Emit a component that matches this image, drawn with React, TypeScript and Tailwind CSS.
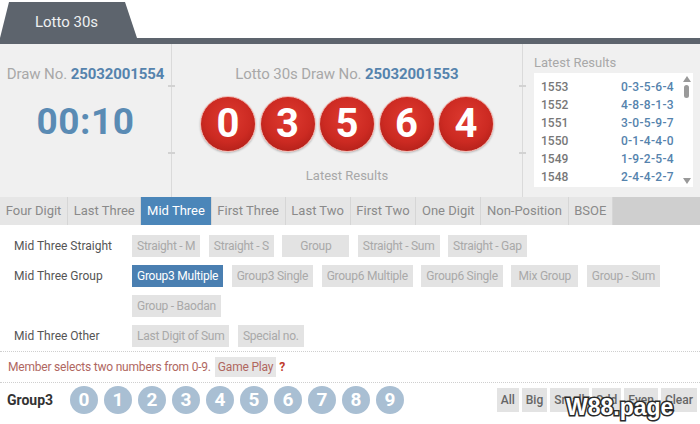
import React from "react";

const tabs = ["Four Digit", "Last Three", "Mid Three", "First Three", "Last Two", "First Two", "One Digit", "Non-Position", "BSOE"];

const history: [string, string][] = [
  ["1553", "0-3-5-6-4"],
  ["1552", "4-8-8-1-3"],
  ["1551", "3-0-5-9-7"],
  ["1550", "0-1-4-4-0"],
  ["1549", "1-9-2-5-4"],
  ["1548", "2-4-4-2-7"],
];

type Opt = { label: string; active?: boolean; wide?: boolean };
const optionRows: { title: string; opts: Opt[] }[] = [
  {
    title: "Mid Three Straight",
    opts: [{ label: "Straight - M" }, { label: "Straight - S" }, { label: "Group", wide: true }, { label: "Straight - Sum" }, { label: "Straight - Gap" }],
  },
  {
    title: "Mid Three Group",
    opts: [
      { label: "Group3 Multiple", active: true },
      { label: "Group3 Single" },
      { label: "Group6 Multiple" },
      { label: "Group6 Single" },
      { label: "Mix Group", wide: true },
      { label: "Group - Sum" },
    ],
  },
  { title: "", opts: [{ label: "Group - Baodan" }] },
  { title: "Mid Three Other", opts: [{ label: "Last Digit of Sum" }, { label: "Special no." }] },
];

export default function App() {
  return (
    <div className="w-[700px] h-[424px] overflow-hidden bg-white relative" style={{ fontFamily: "Roboto, 'Liberation Sans', sans-serif" }}>
      {/* game tab */}
      <div className="h-[38px] pt-[2px]">
        <div className="w-[137px] h-[36px] bg-[#5d646d] rounded-t-[8px] [clip-path:polygon(0_100%,9px_0,125px_0,137px_100%)] flex items-center justify-center pr-[4px] pt-[4px]">
          <span className="text-[15px] text-[#eef0f2]">Lotto 30s</span>
        </div>
      </div>
      <div className="h-[6px] bg-[#5d646d]" />

      {/* draw panel */}
      <div className="h-[153px] bg-[#f0f0f0] flex">
        <div className="w-[172px] border-r border-[#dadada] relative flex flex-col items-center pt-[19px]">
          <div className="text-[15px] text-[#a8a8a8] tracking-[-0.1px]">
            Draw No. <span className="font-bold text-[#5583ad]">25032001554</span>
          </div>
          <div className="mt-[13px] text-[37px] leading-[46px] font-bold text-[#5a8bb4] tracking-[0.5px]">00:10</div>
          <div className="absolute right-[-4px] top-[41px] w-[7px] h-[2px] bg-[#d2d2d2]" />
          <div className="absolute right-[-4px] top-[108px] w-[7px] h-[2px] bg-[#d2d2d2]" />
        </div>

        <div className="w-[351px] border-r border-[#dadada] relative flex flex-col items-center pt-[19px]">
          <div className="text-[15px] text-[#a8a8a8] tracking-[-0.1px]">
            Lotto 30s Draw No. <span className="font-bold text-[#5583ad]">25032001553</span>
          </div>
          <div className="mt-[10px] flex gap-[3.5px]">
            {["0", "3", "5", "6", "4"].map((n, i) => (
              <div
                key={i}
                className="w-[56px] h-[56px] rounded-full border border-[#f3b9b2] flex items-center justify-center bg-[radial-gradient(circle_at_50%_40%,#de3a30_0%,#cc2a22_55%,#a11a14_100%)] shadow-[0_1px_2px_rgba(0,0,0,0.25)]"
              >
                <span className="text-[40px] font-bold text-white leading-none mt-[1px]">{n}</span>
              </div>
            ))}
          </div>
          <div className="mt-[14px] text-[13px] text-[#a8a8a8]">Latest Results</div>
          <div className="absolute right-[-4px] top-[41px] w-[7px] h-[2px] bg-[#d2d2d2]" />
          <div className="absolute right-[-4px] top-[108px] w-[7px] h-[2px] bg-[#d2d2d2]" />
        </div>

        <div className="flex-1 pl-[11px] pr-[7px] pt-[11px]">
          <div className="text-[13px] text-[#a8a8a8] leading-[16px]">Latest Results</div>
          <div className="mt-[2px] h-[114px] bg-white flex">
            <div className="flex-1 pl-[7px] pr-[6px] pt-[5px]">
              {history.map(([a, b]) => (
                <div key={a} className="h-[18px] flex items-center justify-between text-[12px] font-medium">
                  <span className="text-[#777]">{a}</span>
                  <span className="text-[#5583ad] tracking-[0.3px]">{b}</span>
                </div>
              ))}
            </div>
            <div className="w-[13px] flex flex-col items-center pt-[3px] pb-[3px]">
              <svg width="8" height="6" viewBox="0 0 8 6"><path d="M4 0 L8 6 L0 6 Z" fill="#999" /></svg>
              <div className="mt-[3px] w-[5px] h-[13px] rounded-full bg-[#9a9a9a]" />
              <div className="flex-1" />
              <svg width="8" height="6" viewBox="0 0 8 6"><path d="M0 0 L8 0 L4 6 Z" fill="#999" /></svg>
            </div>
          </div>
        </div>
      </div>

      {/* play type tabs */}
      <div className="h-[28px] bg-[#cfcfcf] flex">
        {tabs.map((t) => (
          <div
            key={t}
            className={`px-[5.7px] flex items-center text-[13px] border-r border-[#d6d6d6] ${t === "Mid Three" ? "bg-[#4b86b9] text-white" : "bg-[#e6e6e6] text-[#8a8a8a]"}`}
          >
            {t}
          </div>
        ))}
      </div>

      {/* options */}
      <div className="pt-[10px] flex flex-col gap-[8px]">
        {optionRows.map((row, ri) => (
          <div key={ri} className="flex items-center">
            <div className="w-[132px] pl-[14px] text-[12px] text-[#555]">{row.title}</div>
            <div className="flex gap-[8.5px]">
              {row.opts.map((o) => (
                <div
                  key={o.label}
                  className={`h-[22px] flex items-center justify-center text-[12px] tracking-[-0.25px] ${o.wide ? "w-[67px]" : "px-[5px]"} ${o.active ? "bg-[#4a7fb1] text-white" : "bg-[#e3e3e3] text-[#a9a9a9]"}`}
                >
                  {o.label}
                </div>
              ))}
            </div>
          </div>
        ))}
      </div>

      {/* hint */}
      <div className="mt-[4px] border-t border-b border-dotted border-[#cfcfcf] h-[32px] flex items-center pl-[8px] text-[12px] text-[#b0675f] tracking-[-0.2px]">
        <span>Member selects two numbers from 0-9.</span>
        <span className="ml-[4px] bg-[#e6e6e6] px-[3px] h-[20px] flex items-center">Game Play</span>
        <span className="ml-[3px] font-bold text-[#c0392b]">?</span>
      </div>

      {/* number picker */}
      <div className="h-[34px] flex items-center">
        <div className="w-[70px] pl-[7px] text-[14px] font-bold text-[#333]">Group3</div>
        <div className="flex gap-[6px]">
          {Array.from({ length: 10 }, (_, i) => (
            <div key={i} className="w-[28px] h-[28px] rounded-full bg-[#a9bfd3] flex items-center justify-center text-[19px] font-bold text-white">
              {i}
            </div>
          ))}
        </div>
        <div className="ml-auto mr-[3px] flex gap-[3px]">
          {["All", "Big", "Small", "Odd", "Even", "Clear"].map((b) => (
            <div key={b} className="h-[24px] px-[4px] bg-[#e3e3e3] flex items-center text-[12px] font-medium text-[#666]">
              {b}
            </div>
          ))}
        </div>
      </div>

      {/* site mark */}
      <div className="absolute left-[566px] top-[396px] text-[23px] font-bold text-white leading-none [paint-order:stroke_fill] [-webkit-text-stroke:3px_#2a2a2a]" style={{ fontFamily: "'Liberation Sans', Arial, sans-serif" }}>
        W88.page
      </div>
    </div>
  );
}
